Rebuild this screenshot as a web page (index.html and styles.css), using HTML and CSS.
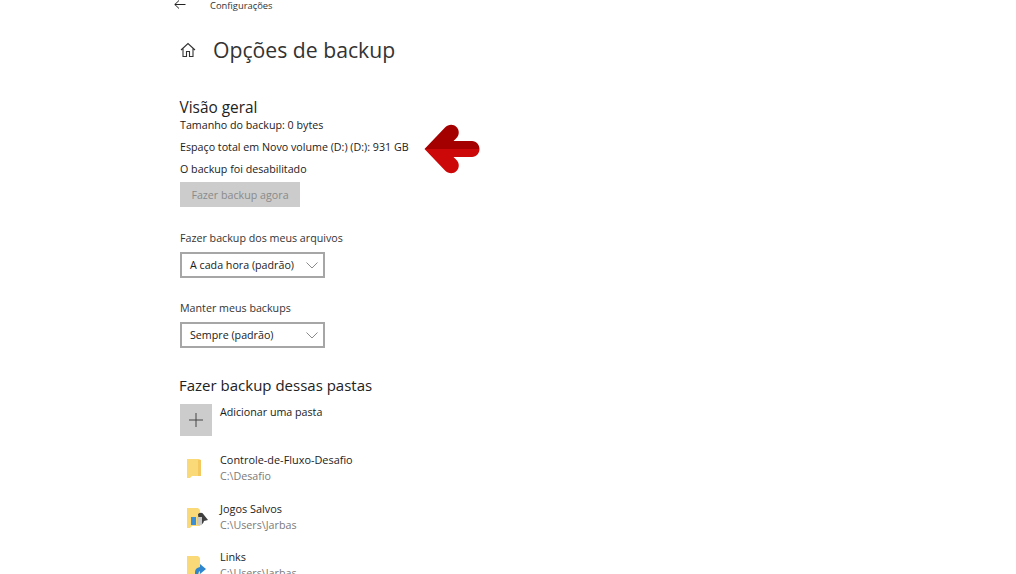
FILE: index.html
```html
<!DOCTYPE html>
<html lang="pt-BR">
<head>
  <meta charset="UTF-8">
  <title>Opções de backup</title>
  <link rel="stylesheet" href="styles.css">
</head>
<body>
  <header class="topbar">
    <svg class="back" width="12" height="10" viewBox="0 0 12 10"><path d="M5 0.5 L0.8 4.5 L5 8.5 M0.8 4.5 H11.5" fill="none" stroke="#222" stroke-width="1"/></svg>
    <span class="app">Configurações</span>
  </header>

  <main class="content">
    <div class="page-title">
      <svg class="home" width="16" height="16" viewBox="0 0 16 16"><path d="M1 8 L8 1.5 L15 8 M3 6.5 V14.5 H6.5 V9.5 H9.5 V14.5 H13 V6.5" fill="none" stroke="#333" stroke-width="1.1"/></svg>
      <h1>Opções de backup</h1>
    </div>

    <section class="overview">
      <h2>Visão geral</h2>
      <p class="line-first">Tamanho do backup: 0 bytes</p>
      <p class="line">Espaço total em Novo volume (D:) (D:): 931 GB</p>
      <p class="line">O backup foi desabilitado</p>
      <div class="btn-disabled">Fazer backup agora</div>
    </section>

    <section class="field first">
      <label>Fazer backup dos meus arquivos</label>
      <div class="select">
        <span>A cada hora (padrão)</span>
        <svg width="12" height="7" viewBox="0 0 12 7"><path d="M0.5 0.5 L6 6 L11.5 0.5" fill="none" stroke="#8a8a8a" stroke-width="1"/></svg>
      </div>
    </section>

    <section class="field">
      <label>Manter meus backups</label>
      <div class="select">
        <span>Sempre (padrão)</span>
        <svg width="12" height="7" viewBox="0 0 12 7"><path d="M0.5 0.5 L6 6 L11.5 0.5" fill="none" stroke="#8a8a8a" stroke-width="1"/></svg>
      </div>
    </section>

    <section class="folders">
      <h2>Fazer backup dessas pastas</h2>
      <div class="add-row">
        <div class="add-tile">
          <svg width="14" height="14" viewBox="0 0 14 14"><path d="M7 0 V14 M0 7 H14" stroke="#444" stroke-width="1"/></svg>
        </div>
        <span>Adicionar uma pasta</span>
      </div>

      <div class="folder">
        <svg class="folder-icon" width="24" height="22" viewBox="0 0 24 22"><path d="M2 1 H14 L16 2 V18 H7 L5 20 H2 Z" fill="#f9d978"/><path d="M13 2 H16 V18 H13 Z" fill="#f3c95f"/></svg>
        <div class="folder-text"><div class="name">Controle-de-Fluxo-Desafio</div><div class="path">C:\Desafio</div></div>
      </div>
      <div class="folder">
        <svg class="folder-icon" width="24" height="22" viewBox="0 0 24 22"><path d="M2 1 H13 L15 3 V19 H7 L5 21 H2 Z" fill="#f9d978"/><rect x="6" y="10" width="5" height="8" fill="#3b8fd6"/><path d="M13 7 Q17 4 19 8 L23 13 L19 14 Q18 18 14 18 Z" fill="#3f3f3f"/><path d="M12 10 H17 V18 Q14 19 12 17 Z" fill="#c9c9c9"/></svg>
        <div class="folder-text"><div class="name">Jogos Salvos</div><div class="path">C:\Users\Jarbas</div></div>
      </div>
      <div class="folder">
        <svg class="folder-icon" width="24" height="22" viewBox="0 0 24 22"><path d="M2 1 H13 L15 3 V19 H7 L5 21 H2 Z" fill="#f9d978"/><path d="M10 22 V17 Q10 13 15 12 V9 L21 14 L15 19 V16 Q13 16 13 22 Z" fill="#2f86d0"/></svg>
        <div class="folder-text"><div class="name">Links</div><div class="path">C:\Users\Jarbas</div></div>
      </div>
    </section>
  </main>

  <svg class="red-arrow" width="56" height="52" viewBox="0 0 56 52">
    <path d="M0.5 26 L21 4.5 C24.5 1 29.5 1 32.5 4 C35.5 7 35.5 12 32.5 15 L29.5 18 H48 C52.5 18 55.5 22 55.5 26 Z" fill="#a50000"/>
    <path d="M0.5 26 H55.5 C55.5 30 52.5 34 48 34 H29.5 L32.5 37 C35.5 40 35.5 45 32.5 48 C29.5 51 24.5 51 21 47.5 Z" fill="#cc0808"/>
  </svg>
</body>
</html>
```

FILE: styles.css
```css
html, body {
  margin: 0;
  height: 574px;
  overflow: hidden;
  background: #fff;
}
body {
  position: relative;
  font-family: "Open Sans", "Noto Sans", sans-serif;
  color: #1a1a1a;
  font-size: 10.7px;
}
p, h1, h2 {
  margin: 0;
  font-weight: 400;
}

.topbar {
  display: flex;
  align-items: center;
  height: 10px;
  padding-left: 174px;
}
.back {
  margin-right: 24px;
}
.app {
  font-size: 9.4px;
  color: #333;
}

.content {
  padding-left: 180px;
}
.page-title {
  display: flex;
  align-items: center;
  margin-top: 25px;
  height: 30px;
}
.home {
  margin-right: 17px;
}
h1 {
  font-size: 21.2px;
  color: #333;
  line-height: 30px;
}

.overview {
  margin-top: 33px;
}
h2 {
  font-size: 15px;
  line-height: 20px;
  color: #222;
}
.overview h2 {
  font-size: 15.4px;
  margin-left: -0.5px;
  margin-bottom: -1px;
}
.line-first {
  line-height: 16px;
}
.line {
  line-height: 16px;
  margin-top: 6px;
}
.btn-disabled {
  width: 120px;
  height: 25px;
  margin-top: 5px;
  background: #cccccc;
  color: #8a8a8a;
  text-align: center;
  line-height: 26px;
}

.field {
  margin-top: 22px;
}
.field.first {
  margin-top: 23px;
}
.field label {
  display: block;
  line-height: 16px;
  color: #333;
}
.select {
  display: flex;
  align-items: center;
  justify-content: space-between;
  box-sizing: border-box;
  width: 145px;
  height: 26px;
  margin-top: 6px;
  padding: 0 5px 0 8px;
  border: 2px solid #a6a6a6;
}

.folders {
  margin-top: 27px;
}
.folders h2 {
  margin-left: -1px;
}
.add-row {
  display: flex;
  margin-top: 9px;
  height: 32px;
}
.add-row span {
  margin-left: 8px;
  line-height: 16px;
}
.add-tile {
  display: flex;
  align-items: center;
  justify-content: center;
  width: 32px;
  height: 32px;
  background: #cccccc;
}

.folder {
  display: flex;
  height: 48.5px;
  align-items: flex-start;
}
.folder:nth-child(3) {
  margin-top: 16px;
}
.folder-icon {
  margin: 6px 11px 0 5px;
  flex: none;
}
.folder .name {
  font-size: 10.9px;
  line-height: 16px;
  color: #222;
}
.folder .path {
  margin-top: 1px;
  line-height: 15px;
  color: #7a7a7a;
}

.red-arrow {
  position: absolute;
  left: 424px;
  top: 123px;
}
```
